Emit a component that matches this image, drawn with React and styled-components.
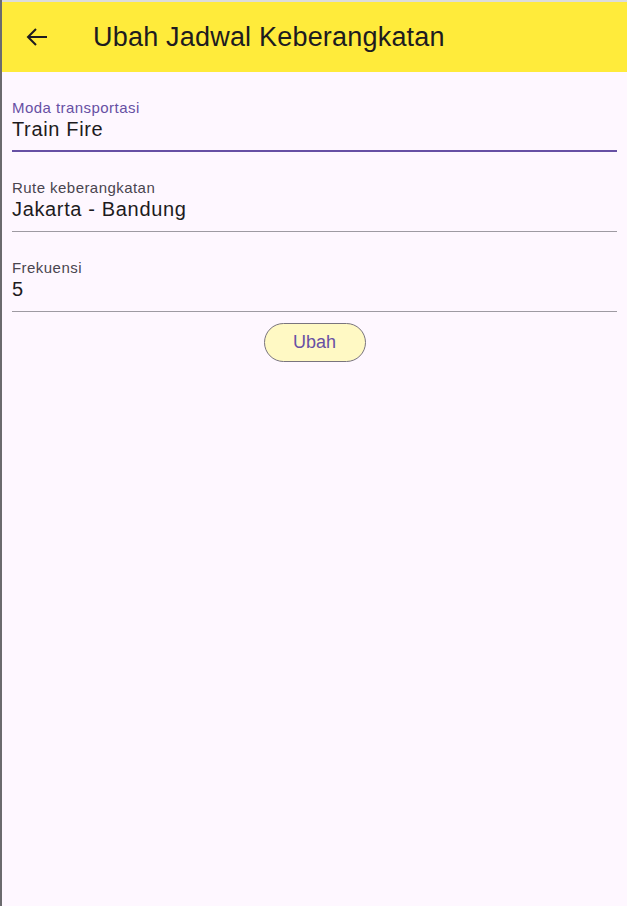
import React from 'react'
import styled, { createGlobalStyle } from 'styled-components'

const Global = createGlobalStyle`
  html, body { margin: 0; padding: 0; }
  body {
    font-family: "Liberation Sans", Arial, sans-serif;
    background: #fef7ff;
  }
`;

const Frame = styled.div`
  display: flex;
  min-height: 906px;
  border-left: 2px solid #6b6a6e;
  box-sizing: border-box;
`;

const Screen = styled.div`
  flex: 1;
  display: flex;
  flex-direction: column;
  border-top: 2px solid #dcdcdc;
  background: #fef7ff;
`;

const AppBar = styled.header`
  height: 70px;
  background: #ffeb3b;
  display: flex;
  align-items: center;
  color: #1d1b20;
`;

const BackButton = styled.button`
  border: none;
  background: none;
  padding: 0;
  margin-left: 23px;
  width: 24px;
  height: 24px;
  display: flex;
  color: #1d1b20;
  cursor: pointer;
`;

const Title = styled.h1`
  margin: 0 0 0 44px;
  font-size: 27px;
  font-weight: 400;
  letter-spacing: 0.2px;
`;

const Form = styled.div`
  display: flex;
  flex-direction: column;
  padding: 0 10px 0 10px;
`;

const Field = styled.div`
  display: flex;
  flex-direction: column;
  padding-top: 27px;
  padding-bottom: ${p => (p.$focused ? '9px' : '10px')};
  border-bottom: ${p => (p.$focused ? '2px solid #6750a4' : '1px solid #9e9aa2')};
`;

const Label = styled.label`
  font-size: 15px;
  line-height: 17px;
  letter-spacing: 0.45px;
  color: ${p => (p.$focused ? '#6750a4' : '#49454f')};
`;

const Value = styled.div`
  margin-top: 1px;
  font-size: 20px;
  line-height: 24px;
  letter-spacing: 0.65px;
  color: #1d1b20;
`;

const Actions = styled.div`
  display: flex;
  justify-content: center;
  margin-top: 11px;
`;

const Button = styled.button`
  height: 39px;
  width: 102px;
  border-radius: 20px;
  border: 1px solid #79747e;
  background: #fff9c4;
  color: #6750a4;
  font-family: inherit;
  font-size: 18px;
  cursor: pointer;
`;

const fields = [
  { label: 'Moda transportasi', value: 'Train Fire', focused: true },
  { label: 'Rute keberangkatan', value: 'Jakarta - Bandung' },
  { label: 'Frekuensi', value: '5' },
];

export default function App() {
  return (
    <>
      <Global />
      <Frame>
        <Screen>
          <AppBar>
            <BackButton aria-label="Kembali">
              <svg width="24" height="24" viewBox="0 0 24 24" fill="none" stroke="currentColor" strokeWidth="2">
                <path d="M22 12H3.5M11 4l-8 8 8 8" />
              </svg>
            </BackButton>
            <Title>Ubah Jadwal Keberangkatan</Title>
          </AppBar>
          <Form>
            {fields.map(f => (
              <Field key={f.label} $focused={f.focused}>
                <Label $focused={f.focused}>{f.label}</Label>
                <Value>{f.value}</Value>
              </Field>
            ))}
            <Actions>
              <Button>Ubah</Button>
            </Actions>
          </Form>
        </Screen>
      </Frame>
    </>
  )
}
